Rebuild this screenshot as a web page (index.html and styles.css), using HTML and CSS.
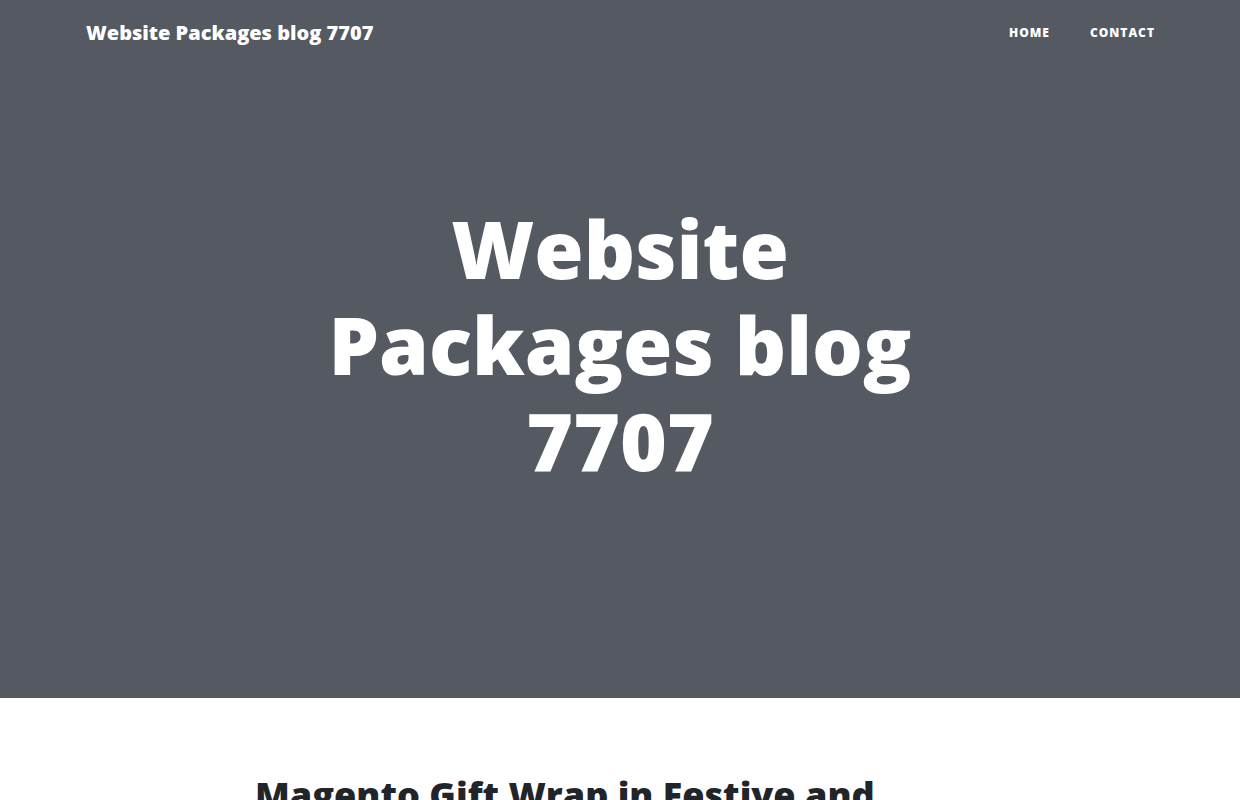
FILE: index.html
```html
<!DOCTYPE html>
<html lang="en">
<head>
<meta charset="utf-8">
<title>Website Packages blog 7707</title>
<link rel="stylesheet" href="styles.css">
</head>
<body>
<nav class="main-nav">
  <div class="nav-inner">
    <a class="brand" href="#">Website Packages blog 7707</a>
    <ul class="nav-links">
      <li><a href="#">Home</a></li>
      <li><a href="#">Contact</a></li>
    </ul>
  </div>
</nav>
<header class="masthead">
  <div class="heading-col">
    <h1 class="site-title">Website Packages blog 7707</h1>
    <span class="subheading"></span>
  </div>
</header>
<main class="content">
  <div class="content-col">
    <article class="post-preview">
      <h2 class="post-title">Magento Gift Wrap in Festive and Seasonal Styles</h2>
    </article>
  </div>
</main>
</body>
</html>
```
FILE: styles.css
```css
* { box-sizing: border-box; }
html, body { margin: 0; padding: 0; }
body {
  font-family: "Open Sans", "Liberation Sans", sans-serif;
  color: #212529;
  background: #fff;
  position: relative;
}
a { text-decoration: none; color: inherit; }

.main-nav {
  position: absolute;
  top: 0;
  left: 0;
  right: 0;
  z-index: 10;
  padding: 17px 0;
}
.nav-inner {
  display: flex;
  align-items: center;
  justify-content: space-between;
  padding: 0 65px 0 86px;
}
.brand {
  color: #fff;
  font-weight: 800;
  font-size: 20px;
  line-height: 30px;
}
.nav-links {
  list-style: none;
  margin: 0;
  padding: 0;
  display: flex;
}
.nav-links a {
  display: block;
  padding: 10px 20px;
  color: #fff;
  font-size: 12px;
  font-weight: 800;
  letter-spacing: 1px;
  text-transform: uppercase;
  line-height: 11px;
}

.masthead {
  background: #555a62;
  margin-bottom: 50px;
  padding: 200px 0;
  display: flex;
  justify-content: center;
}
.heading-col {
  width: 730px;
  text-align: center;
  color: #fff;
}
.site-title {
  margin: 0;
  font-size: 80px;
  font-weight: 800;
  line-height: 1.2;
}
.subheading {
  display: block;
  margin-top: 10px;
}

.content {
  display: flex;
  justify-content: center;
}
.content-col {
  width: 730px;
}
.post-preview { }
.post-title {
  margin: 25px 0 10px;
  font-size: 36px;
  font-weight: 800;
  line-height: 1.2;
}
```
